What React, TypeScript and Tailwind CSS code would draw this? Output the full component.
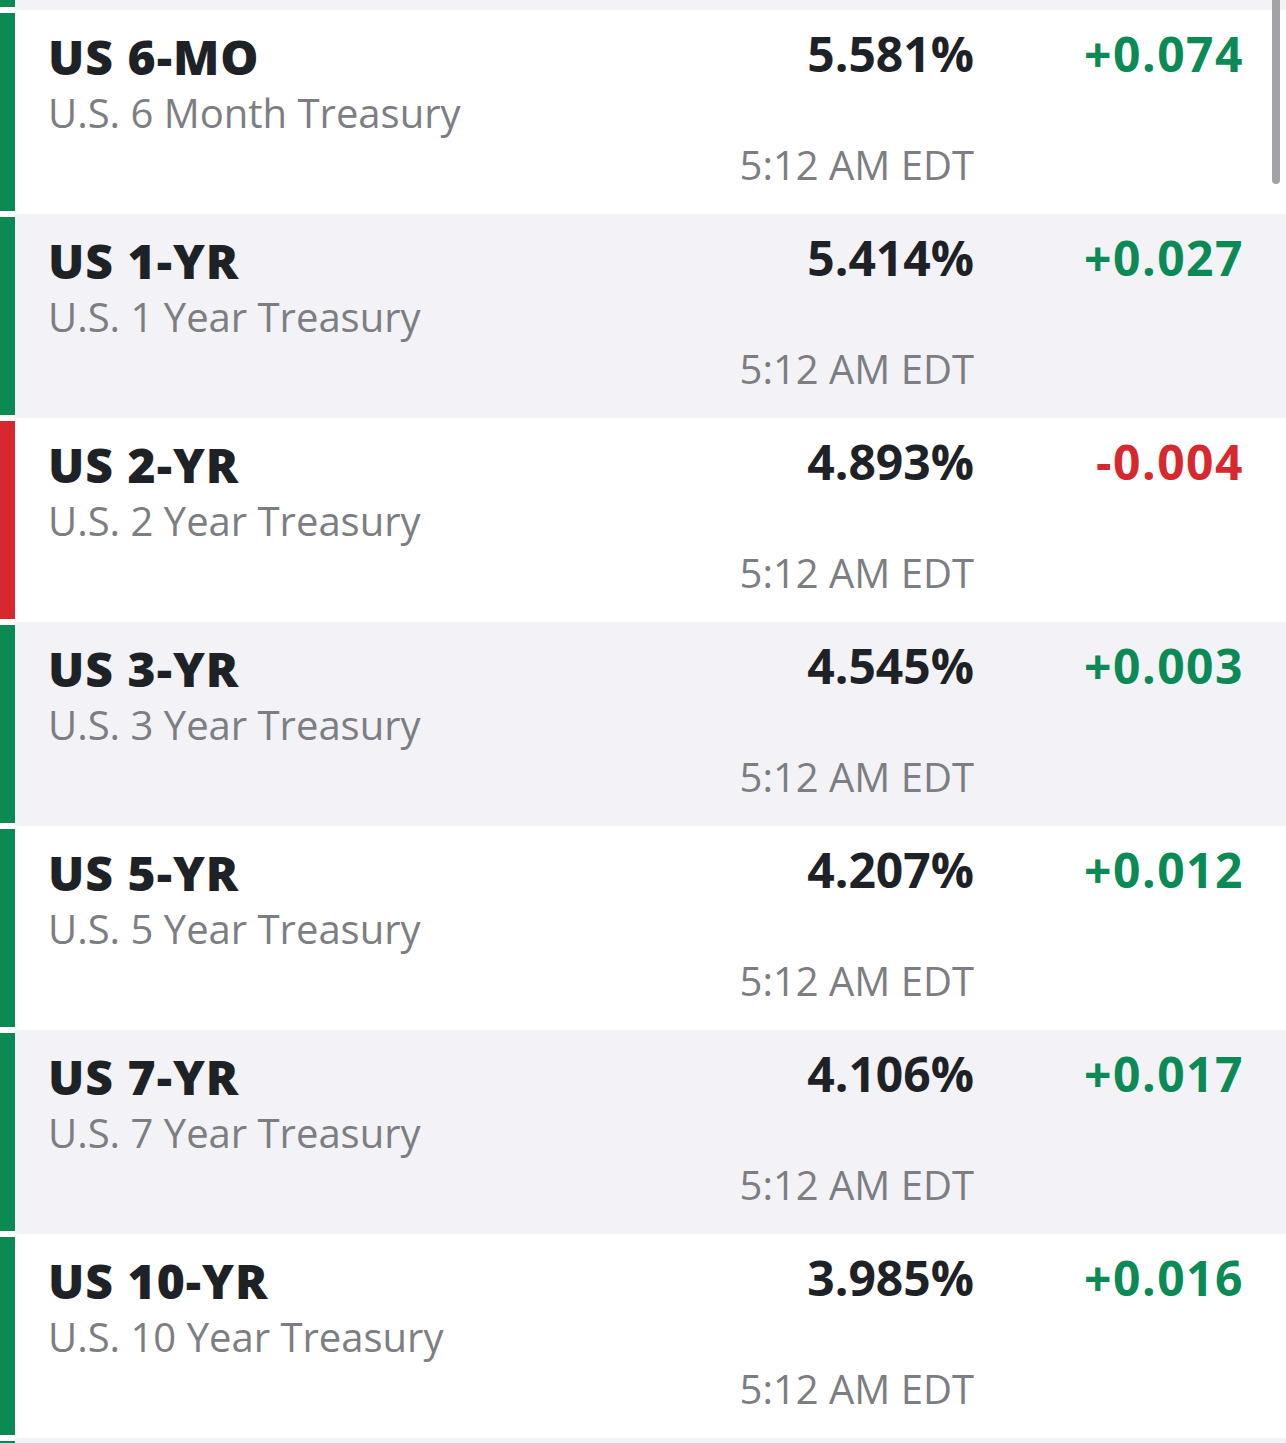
import React from "react";

type Row = { sym: string; name: string; value: string; change: string; up: boolean };

const rows: Row[] = [
  { sym: "US 6-MO", name: "U.S. 6 Month Treasury", value: "5.581%", change: "+0.074", up: true },
  { sym: "US 1-YR", name: "U.S. 1 Year Treasury", value: "5.414%", change: "+0.027", up: true },
  { sym: "US 2-YR", name: "U.S. 2 Year Treasury", value: "4.893%", change: "-0.004", up: false },
  { sym: "US 3-YR", name: "U.S. 3 Year Treasury", value: "4.545%", change: "+0.003", up: true },
  { sym: "US 5-YR", name: "U.S. 5 Year Treasury", value: "4.207%", change: "+0.012", up: true },
  { sym: "US 7-YR", name: "U.S. 7 Year Treasury", value: "4.106%", change: "+0.017", up: true },
  { sym: "US 10-YR", name: "U.S. 10 Year Treasury", value: "3.985%", change: "+0.016", up: true },
];

export default function App() {
  return (
    <div
      className="relative w-[1286px] h-[1443px] overflow-hidden bg-[#f2f2f7]"
      style={{ fontFamily: "'Open Sans', Lato, sans-serif" }}
    >
      <div className="h-[10px] flex">
        <div className="w-[15px] bg-white">
          <div className="h-[7px] bg-[#0b8a55]" />
        </div>
      </div>
      {rows.map((r, i) => (
        <div
          key={r.sym}
          className={`flex h-[204px] ${i % 2 === 0 ? "bg-white" : "bg-[#f2f2f7]"}`}
        >
          <div className="w-[15px] bg-white py-[3px] shrink-0">
            <div className={`h-full ${r.up ? "bg-[#0b8a55]" : "bg-[#d7282f]"}`} />
          </div>
          <div className="flex-1 pl-[33px] flex flex-col">
            <div className="pt-[23px] text-[48px] leading-[48px] font-extrabold tracking-[1px] text-[#1e2226]">
              {r.sym}
            </div>
            <div className="mt-[12px] text-[40px] leading-[40px] font-medium text-[#7c7e82]">
              {r.name}
            </div>
          </div>
          <div className="flex flex-col items-end">
            <div className="pt-[20px] text-[48px] leading-[48px] font-bold text-[#1e2226]">
              {r.value}
            </div>
            <div className="mt-[67px] text-[40px] leading-[40px] font-medium text-[#7c7e82]">
              5:12 AM EDT
            </div>
          </div>
          <div className="w-[270px] flex justify-end shrink-0">
            <div
              className={`pt-[20px] text-[48px] leading-[48px] font-bold tracking-[1.5px] ${
                r.up ? "text-[#0b8a55]" : "text-[#d7282f]"
              }`}
            >
              {r.change}
            </div>
          </div>
          <div className="w-[42px] shrink-0" />
        </div>
      ))}
      <div className="flex h-[10px]">
        <div className="w-[15px] bg-white pt-[3px]">
          <div className="h-full bg-[#0b8a55]" />
        </div>
      </div>
      <div className="absolute left-[1272px] top-0 w-[8px] h-[184px] rounded-b-full bg-[#a3a3a7]" />
    </div>
  );
}
